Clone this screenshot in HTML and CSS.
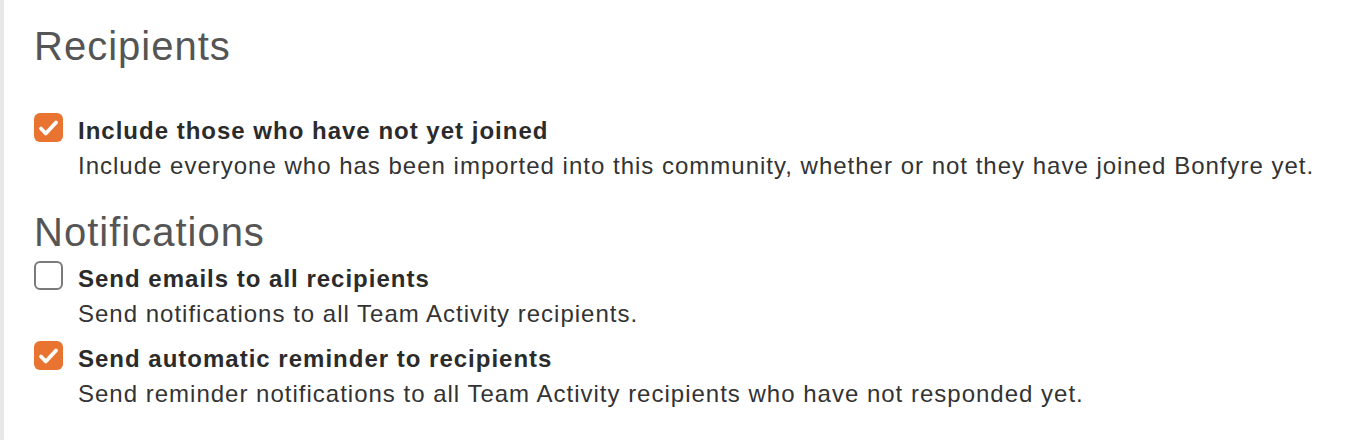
FILE: index.html
```html
<!DOCTYPE html>
<html lang="en">
<head>
<meta charset="utf-8">
<title>Recipients</title>
<link rel="stylesheet" href="styles.css">
</head>
<body>
<div class="panel">
  <h2 class="section-title first">Recipients</h2>
  <div class="option">
    <span class="box checked"><svg viewBox="0 0 29 29" width="29" height="29"><path d="M7 15.5 L11.8 20.5 L22 9.5" fill="none" stroke="#fff" stroke-width="3.8" stroke-linecap="round" stroke-linejoin="round"/></svg></span>
    <div class="text">
      <div class="label">Include those who have not yet joined</div>
      <div class="desc">Include everyone who has been imported into this community, whether or not they have joined Bonfyre yet.</div>
    </div>
  </div>
  <h2 class="section-title second">Notifications</h2>
  <div class="option">
    <span class="box"></span>
    <div class="text">
      <div class="label">Send emails to all recipients</div>
      <div class="desc">Send notifications to all Team Activity recipients.</div>
    </div>
  </div>
  <div class="option next">
    <span class="box checked"><svg viewBox="0 0 29 29" width="29" height="29"><path d="M7 15.5 L11.8 20.5 L22 9.5" fill="none" stroke="#fff" stroke-width="3.8" stroke-linecap="round" stroke-linejoin="round"/></svg></span>
    <div class="text">
      <div class="label">Send automatic reminder to recipients</div>
      <div class="desc">Send reminder notifications to all Team Activity recipients who have not responded yet.</div>
    </div>
  </div>
</div>
</body>
</html>
```
FILE: styles.css
```css
html, body {
  margin: 0;
  padding: 0;
  background: #ffffff;
}
body {
  font-family: "Liberation Sans", Arial, Helvetica, sans-serif;
  color: #333333;
}
.panel {
  min-height: 440px;
  box-sizing: border-box;
  border-left: 4px solid #e8e8e8;
  padding: 24px 20px 0 30px;
}
.section-title {
  margin: 0;
  font-size: 40px;
  line-height: 44px;
  letter-spacing: 1px;
  font-weight: normal;
  color: #555555;
}
.section-title.first {
  margin-bottom: 45px;
}
.section-title.second {
  margin-top: 27px;
  margin-bottom: 7px;
}
.option {
  display: flex;
  align-items: flex-start;
  gap: 15px;
}
.option.next {
  margin-top: 10px;
}
.box {
  flex: 0 0 auto;
  width: 29px;
  height: 29px;
  box-sizing: border-box;
  border-radius: 6px;
  border: 2px solid #7a7a7a;
  background: #ffffff;
  display: flex;
}
.box.checked {
  border: none;
  background: #e97432;
}
.box svg {
  display: block;
}
.text {
  font-size: 24px;
  line-height: 35px;
  letter-spacing: 1px;
}
.label {
  font-weight: bold;
  color: #2b2b2b;
}
.desc {
  color: #333333;
}
```
